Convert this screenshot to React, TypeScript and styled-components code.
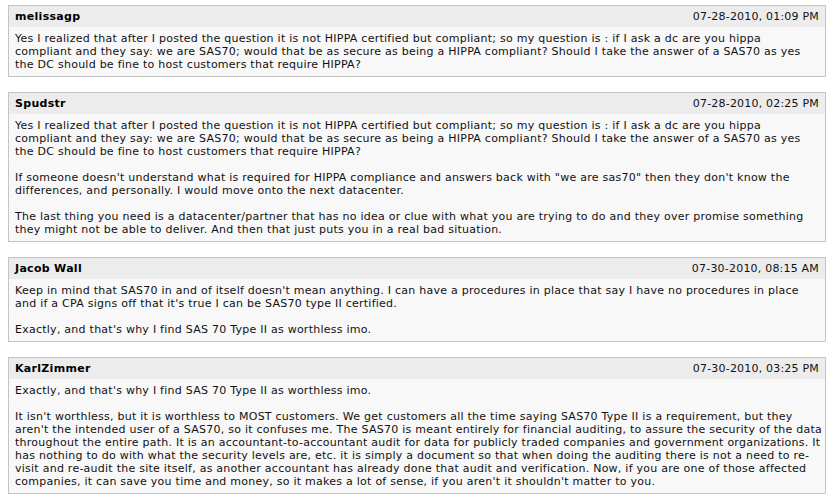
import React from "react";
import styled, { createGlobalStyle } from "styled-components";

const Global = createGlobalStyle`
  html, body { margin: 0; padding: 0; background: #ffffff; }
  body { font-family: Verdana, "DejaVu Sans", sans-serif; font-size: 11px; color: #000; }
`;

const Page = styled.div`
  display: flex;
  flex-direction: column;
  gap: 15px;
  padding: 5px 9px 0 8px;
`;

const Post = styled.div`
  border: 1px solid #c4c4c4;
  background: #f8f8f8;
`;

const Header = styled.div`
  display: flex;
  justify-content: space-between;
  align-items: center;
  height: 21px;
  padding: 0 6px;
  background: #ececec;
`;

const Author = styled.span`
  font-weight: bold;
  color: #000;
  letter-spacing: 0.3px;
`;

const Stamp = styled.span`
  color: #111;
  letter-spacing: 0.2px;
`;

const Body = styled.div`
  padding: 5px 6px 5px 6px;
  line-height: 13px;
  color: #111;
  white-space: nowrap;
  letter-spacing: 0.25px;
`;

const Para = styled.p`
  margin: 0;
  & + & { margin-top: 13px; }
`;

type PostData = { author: string; date: string; paras: string[][] };

const posts: PostData[] = [
  {
    author: "melissagp",
    date: "07-28-2010, 01:09 PM",
    paras: [
      [
        "Yes I realized that after I posted the question it is not HIPPA certified but compliant; so my question is : if I ask a dc are you hippa",
        "compliant and they say: we are SAS70; would that be as secure as being a HIPPA compliant? Should I take the answer of a SAS70 as yes",
        "the DC should be fine to host customers that require HIPPA?",
      ],
    ],
  },
  {
    author: "Spudstr",
    date: "07-28-2010, 02:25 PM",
    paras: [
      [
        "Yes I realized that after I posted the question it is not HIPPA certified but compliant; so my question is : if I ask a dc are you hippa",
        "compliant and they say: we are SAS70; would that be as secure as being a HIPPA compliant? Should I take the answer of a SAS70 as yes",
        "the DC should be fine to host customers that require HIPPA?",
      ],
      [
        "If someone doesn't understand what is required for HIPPA compliance and answers back with \"we are sas70\" then they don't know the",
        "differences, and personally. I would move onto the next datacenter.",
      ],
      [
        "The last thing you need is a datacenter/partner that has no idea or clue with what you are trying to do and they over promise something",
        "they might not be able to deliver. And then that just puts you in a real bad situation.",
      ],
    ],
  },
  {
    author: "Jacob Wall",
    date: "07-30-2010, 08:15 AM",
    paras: [
      [
        "Keep in mind that SAS70 in and of itself doesn't mean anything. I can have a procedures in place that say I have no procedures in place",
        "and if a CPA signs off that it's true I can be SAS70 type II certified.",
      ],
      ["Exactly, and that's why I find SAS 70 Type II as worthless imo."],
    ],
  },
  {
    author: "KarlZimmer",
    date: "07-30-2010, 03:25 PM",
    paras: [
      ["Exactly, and that's why I find SAS 70 Type II as worthless imo."],
      [
        "It isn't worthless, but it is worthless to MOST customers. We get customers all the time saying SAS70 Type II is a requirement, but they",
        "aren't the intended user of a SAS70, so it confuses me. The SAS70 is meant entirely for financial auditing, to assure the security of the data",
        "throughout the entire path. It is an accountant-to-accountant audit for data for publicly traded companies and government organizations. It",
        "has nothing to do with what the security levels are, etc. it is simply a document so that when doing the auditing there is not a need to re-",
        "visit and re-audit the site itself, as another accountant has already done that audit and verification. Now, if you are one of those affected",
        "companies, it can save you time and money, so it makes a lot of sense, if you aren't it shouldn't matter to you.",
      ],
    ],
  },
];

export default function App() {
  return (
    <>
      <Global />
      <Page>
        {posts.map((p) => (
          <Post key={p.author}>
            <Header>
              <Author>{p.author}</Author>
              <Stamp>{p.date}</Stamp>
            </Header>
            <Body>
              {p.paras.map((lines, i) => (
                <Para key={i}>
                  {lines.map((l, j) => (
                    <React.Fragment key={j}>
                      {l}
                      {j < lines.length - 1 && <br />}
                    </React.Fragment>
                  ))}
                </Para>
              ))}
            </Body>
          </Post>
        ))}
      </Page>
    </>
  );
}
